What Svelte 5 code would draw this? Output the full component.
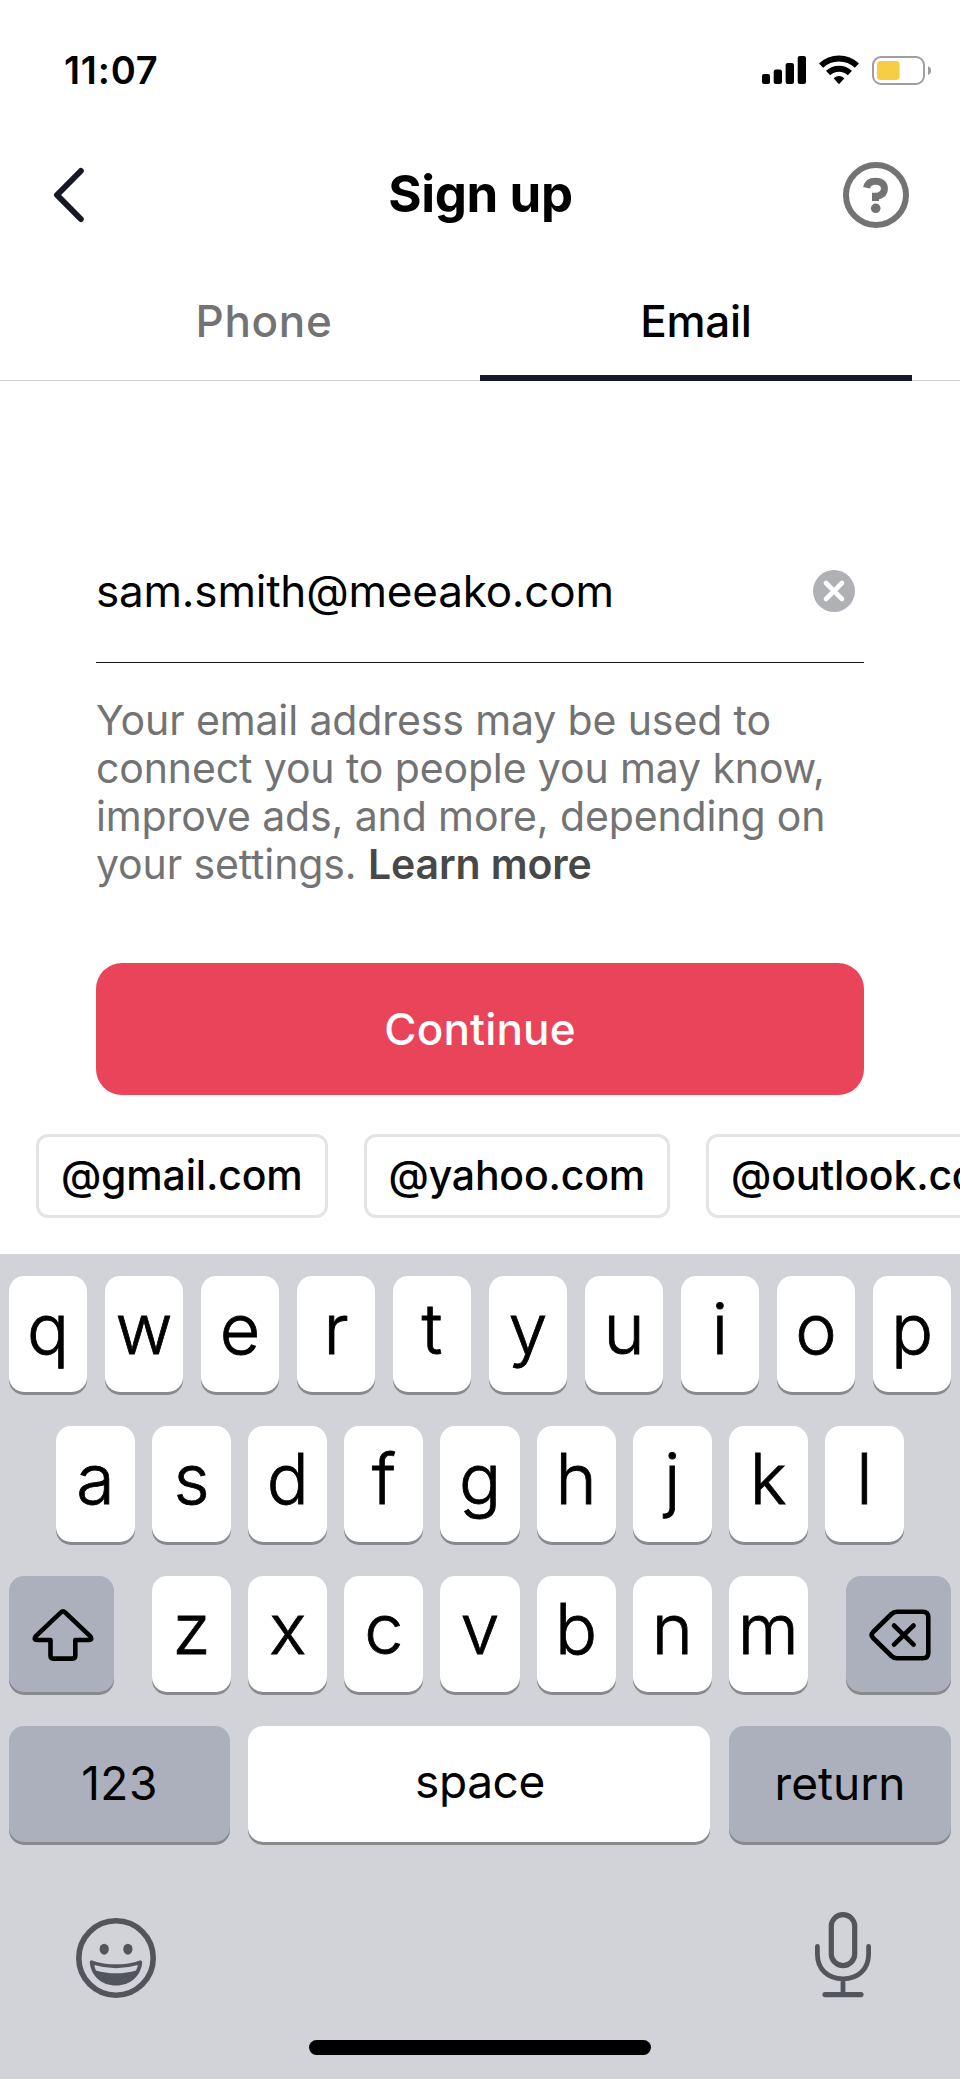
<script lang="ts">
  let email = $state('sam.smith@meeako.com');
  let activeTab = $state('Email');

  const tabs = ['Phone', 'Email'];
  const domains = ['@gmail.com', '@yahoo.com', '@outlook.com'];

  const topRow = 'qwertyuiop'.split('');
  const homeRow = 'asdfghjkl'.split('');
  const bottomRow = 'zxcvbnm'.split('');

  function type(char: string) {
    email += char;
  }

  function useDomain(domain: string) {
    email = email.split('@')[0] + domain;
  }
</script>

<div class="screen">
  <div class="status-bar">
    <span class="time">11:07</span>
    <div class="status-icons">
      <svg class="signal" width="44" height="28" viewBox="0 0 44 28">
        <rect x="0" y="18" width="8" height="10" rx="2" />
        <rect x="11.7" y="13.5" width="8.3" height="14.5" rx="2.2" />
        <rect x="23.6" y="7" width="8.4" height="21" rx="2.2" />
        <rect x="35.7" y="0" width="8.3" height="28" rx="2.2" />
      </svg>
      <svg class="wifi" width="40" height="30" viewBox="0 0 40 30">
        <path d="M2.1 10.6A26 26 0 0 1 37.9 10.6" fill="none" stroke="#000" stroke-width="6" />
        <path d="M9.1 18A15.8 15.8 0 0 1 30.9 18" fill="none" stroke="#000" stroke-width="6" />
        <path d="M14.6 23.2Q20 18.8 25.4 23.2L20.7 28.6Q20 29.2 19.3 28.6Z" />
      </svg>
      <svg class="battery" width="59" height="29" viewBox="0 0 59 29">
        <rect x="1" y="1" width="51" height="27" rx="8" fill="none" stroke="#9f9f9f" stroke-width="2" />
        <rect x="5" y="5" width="22.6" height="19" rx="3.5" fill="#f7cd46" />
        <path d="M56 10.3Q59 11.3 59 14.5T56 18.9Z" fill="#9a9a9a" />
      </svg>
    </div>
  </div>

  <header>
    <button class="icon-button" aria-label="Back">
      <svg width="32" height="56" viewBox="0 0 32 56">
        <path d="M28.8 4L5 28L28.8 52" fill="none" stroke="#161823" stroke-width="6" stroke-linecap="round" stroke-linejoin="round" />
      </svg>
    </button>
    <h1>Sign up</h1>
    <button class="icon-button" aria-label="Help">
      <svg width="66" height="66" viewBox="0 0 66 66">
        <circle cx="33" cy="33" r="30" fill="none" stroke="#737373" stroke-width="6" />
        <path d="M23.5 25.8C24.4 21.3 28 19.2 32.6 19.2C38.2 19.2 41.4 22 41.4 26.4C41.4 31.8 37.6 34 32.5 34.2V39" fill="none" stroke="#737373" stroke-width="7" />
        <circle cx="32.7" cy="46.3" r="4.8" fill="#737373" />
      </svg>
    </button>
  </header>

  <nav class="tabs">
    {#each tabs as tab (tab)}
      <button class="tab" class:active={tab === activeTab} onclick={() => (activeTab = tab)}>{tab}</button>
    {/each}
  </nav>

  <main>
    <div class="field">
      <span class="value">{email}</span>
      <button class="icon-button" aria-label="Clear" onclick={() => (email = '')}>
        <svg width="42" height="42" viewBox="0 0 42 42">
          <circle cx="21" cy="21" r="21" fill="#b0b1b5" />
          <path d="M13 13L29 29M29 13L13 29" stroke="#fff" stroke-width="4.6" stroke-linecap="round" />
        </svg>
      </button>
    </div>

    <p class="notice">
      Your email address may be used to<br />
      connect you to people you may know,<br />
      improve ads, and more, depending on<br />
      your settings. <strong>Learn more</strong>
    </p>

    <button class="continue">Continue</button>
  </main>

  <div class="domains">
    {#each domains as domain (domain)}
      <button class="chip" onclick={() => useDomain(domain)}>{domain}</button>
    {/each}
  </div>

  <div class="keyboard">
    <div class="row">
      {#each topRow as char (char)}
        <button class="key" onclick={() => type(char)}>{char}</button>
      {/each}
    </div>
    <div class="row home">
      {#each homeRow as char (char)}
        <button class="key" onclick={() => type(char)}>{char}</button>
      {/each}
    </div>
    <div class="row bottom">
      <button class="key dark" aria-label="Shift">
        <svg width="62" height="54" viewBox="0 0 62 54">
          <path d="M29.2 4.1Q31 2.3 32.8 4.1L58.4 28.4Q60.6 32 57 32H43.3V47.8Q43.3 50.6 40.5 50.6H21.3Q18.5 50.6 18.5 47.8V32H5Q1.4 32 3.6 28.4Z" />
        </svg>
      </button>
      <div class="letters">
        {#each bottomRow as char (char)}
          <button class="key" onclick={() => type(char)}>{char}</button>
        {/each}
      </div>
      <button class="key dark" aria-label="Delete" onclick={() => (email = email.slice(0, -1))}>
        <svg width="62" height="54" viewBox="0 0 62 54">
          <path d="M28 3.7H53.8Q59.3 3.7 59.3 9.2V44.8Q59.3 50.3 53.8 50.3H28Q24.8 50.3 22.5 48L4.1 30Q1.2 27 4.1 24L22.5 6Q24.8 3.7 28 3.7Z" />
          <path d="M25 17.5L44.6 36.7M44.6 17.5L25 36.7" />
        </svg>
      </button>
    </div>
    <div class="row actions">
      <button class="key dark numbers">123</button>
      <button class="key space" onclick={() => type(' ')}>space</button>
      <button class="key dark">return</button>
    </div>

    <div class="tray">
      <svg class="emoji" width="80" height="80" viewBox="0 0 80 80">
        <circle cx="40" cy="40" r="37.2" fill="none" stroke="#52555c" stroke-width="5.6" />
        <ellipse cx="28.2" cy="31.2" rx="4.6" ry="5.5" />
        <ellipse cx="51.9" cy="31.2" rx="4.6" ry="5.5" />
        <path fill-rule="evenodd" d="M16.2 42.4Q27 46.3 40 46.3T63.8 42.4Q66.4 42 66.2 45C64.6 58.5 54 67.5 40 67.5S15.4 58.5 13.8 45Q13.6 42 16.2 42.4ZM18.4 47C18.6 49 19.2 51 20 52.4Q29 55.2 40 55.2T60 52.4C60.8 51 61.6 49 61.7 47Q51 50.2 40 50.2T18.4 47Z" />
      </svg>
      <svg width="56" height="86" viewBox="0 0 56 86">
        <rect x="16.3" y="2.6" width="23.4" height="51" rx="11.7" fill="none" stroke="#52555c" stroke-width="5.2" />
        <path d="M2.4 34.4V42C2.4 57 12.5 66.8 28 66.8S53.6 57 53.6 42V34.4M28 67V82" fill="none" stroke="#52555c" stroke-width="4.8" stroke-linecap="round" />
        <path d="M10 82.6H46" stroke="#52555c" stroke-width="5.2" stroke-linecap="round" />
      </svg>
    </div>
    <div class="home-indicator"></div>
  </div>
</div>

<style>
  :global(body) {
    margin: 0;
    background: #fff;
  }

  .screen {
    width: 960px;
    height: 2079px;
    display: flex;
    flex-direction: column;
    overflow: hidden;
    background: #fff;
    color: #000;
    font-family: Inter, 'Liberation Sans', sans-serif;
  }

  button {
    margin: 0;
    padding: 0;
    border: 0;
    background: none;
    color: inherit;
    font: inherit;
    letter-spacing: inherit;
  }

  svg {
    display: block;
    flex: none;
  }

  .status-bar {
    height: 140px;
    box-sizing: border-box;
    padding: 0 29px 0 64px;
    display: flex;
    align-items: center;
    justify-content: space-between;
  }

  .time {
    font-size: 38px;
    font-weight: 600;
    letter-spacing: 0.8px;
  }

  .status-icons {
    display: flex;
    align-items: center;
  }

  .wifi {
    margin-left: 13px;
  }

  .battery {
    margin-left: 13px;
  }

  header {
    height: 110px;
    box-sizing: border-box;
    padding: 0 51px 0 52px;
    display: grid;
    grid-template-columns: 66px 1fr 66px;
    align-items: center;
  }

  h1 {
    margin: 0;
    padding-bottom: 3px;
    text-align: center;
    font-size: 51px;
    line-height: 60px;
    font-weight: 700;
    letter-spacing: -0.4px;
  }

  .tabs {
    height: 131px;
    box-sizing: border-box;
    padding: 0 48px;
    display: flex;
    box-shadow: inset 0 -1px #d0d0d0;
  }

  .tab {
    flex: 1;
    box-sizing: border-box;
    padding-top: 16px;
    border-bottom: 6px solid transparent;
    color: #737373;
    font-size: 44px;
    font-weight: 500;
    letter-spacing: 0.7px;
  }

  .tab.active {
    border-color: #161823;
    color: #000;
    letter-spacing: -0.3px;
  }

  main {
    padding: 137px 96px 0;
  }

  .field {
    height: 145px;
    box-sizing: border-box;
    padding: 2px 9px 0 0;
    border-bottom: 1px solid #161616;
    display: flex;
    align-items: center;
    justify-content: space-between;
  }

  .value {
    font-size: 44px;
    letter-spacing: -0.2px;
  }

  .notice {
    margin: 33px 0 0;
    color: #737373;
    font-size: 41px;
    line-height: 48px;
    letter-spacing: -0.12px;
    white-space: nowrap;
  }

  strong {
    color: #484848;
    font-weight: 600;
  }

  .continue {
    width: 100%;
    height: 132px;
    margin-top: 75px;
    border-radius: 26px;
    background: #ea445a;
    color: #fff;
    font-size: 44px;
    font-weight: 500;
    letter-spacing: 0.15px;
  }

  .domains {
    margin-top: 39px;
    padding-left: 36px;
    display: flex;
    gap: 36px;
  }

  .chip {
    flex: none;
    height: 84px;
    padding: 0 22px 2px;
    border: 3px solid #e3e4e4;
    border-radius: 12px;
    font-size: 41px;
    font-weight: 500;
    letter-spacing: -0.18px;
  }

  .keyboard {
    height: 825px;
    box-sizing: border-box;
    margin-top: 36px;
    padding: 22px 9px 0;
    background: #d2d3d9;
    display: flex;
    flex-direction: column;
  }

  .row {
    height: 116px;
    margin-bottom: 34px;
    display: flex;
    gap: 18px;
  }

  .key {
    flex: 1;
    padding-bottom: 11px;
    border-radius: 15px;
    background: #fff;
    box-shadow: 0 3px #88898d;
    font-size: 70px;
    font-weight: 300;
    line-height: 105px;
    -webkit-text-stroke: 0.8px #000;
  }

  .dark {
    padding: 0;
    background: #abb0bc;
    display: flex;
    align-items: center;
    justify-content: center;
  }

  .dark svg {
    fill: none;
    stroke: #000;
    stroke-width: 4.6;
    stroke-linecap: round;
    stroke-linejoin: round;
  }

  .home {
    padding: 0 47px;
    gap: 17px;
  }

  .bottom {
    justify-content: space-between;
    gap: 0;
  }

  .bottom > .key {
    flex: 0 0 105px;
    box-sizing: border-box;
    padding: 2px 0 0 3px;
  }

  .letters {
    width: 656px;
    display: flex;
    gap: 17px;
  }

  .actions .key {
    flex: 0 0 222px;
    box-sizing: border-box;
    padding-bottom: 1px;
    font-size: 46px;
    font-weight: 400;
    -webkit-text-stroke: 0;
  }

  .actions .numbers {
    flex-basis: 221px;
    letter-spacing: 0.5px;
  }

  .actions .space {
    flex: 1;
    margin-right: 1px;
    padding-bottom: 6px;
    padding-left: 2px;
    letter-spacing: -0.4px;
  }

  .tray {
    height: 86px;
    margin-top: 36px;
    padding: 0 80px 0 67px;
    display: flex;
    align-items: flex-start;
    justify-content: space-between;
  }

  .tray svg {
    fill: #52555c;
  }

  .emoji {
    margin-top: 6px;
  }

  .home-indicator {
    width: 342px;
    height: 15px;
    margin: 42px auto 0;
    border-radius: 8px;
    background: #000;
  }
</style>
